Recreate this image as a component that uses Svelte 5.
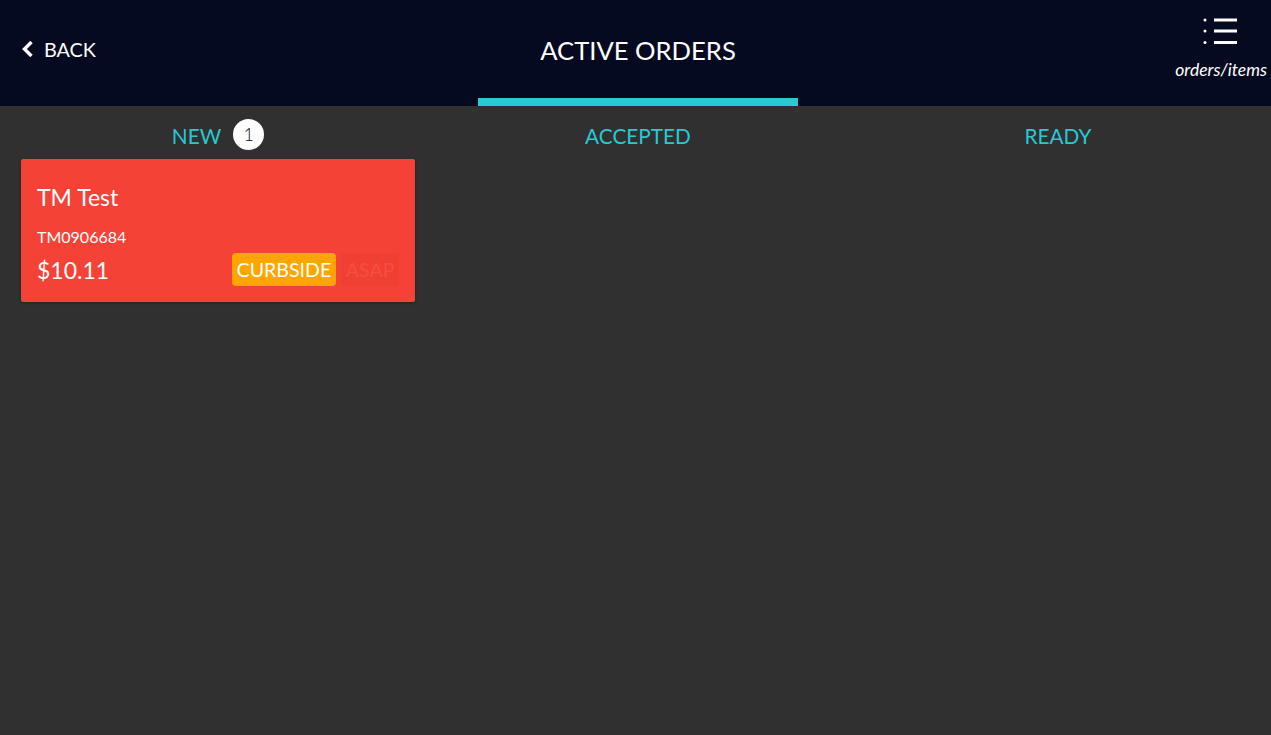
<script>
	let columns = [
		{
			name: "NEW",
			count: 1,
			orders: [{ customer: "TM Test", code: "TM0906684", total: "$10.11", type: "CURBSIDE", time: "ASAP" }],
		},
		{ name: "ACCEPTED", orders: [] },
		{ name: "READY", orders: [] },
	];
</script>

<div class="page">
	<header class="topbar">
		<a class="back" href="#back">
			<svg width="11" height="16" viewBox="0 0 11 16" aria-hidden="true">
				<path d="M9.5 1 L2.5 8 L9.5 15" fill="none" stroke="#fff" stroke-width="3.4" />
			</svg>
			<span>BACK</span>
		</a>
		<h1>ACTIVE ORDERS</h1>
		<button class="toggle">
			<svg width="34" height="28" viewBox="0 0 34 28" aria-hidden="true">
				<circle cx="2" cy="3" r="1.5" fill="#fff" />
				<circle cx="2" cy="14" r="1.5" fill="#fff" />
				<circle cx="2" cy="25.5" r="1.5" fill="#fff" />
				<path d="M11 3H34M11 14H34M11 25.5H34" stroke="#fff" stroke-width="3" />
			</svg>
			<span>orders/items</span>
		</button>
		<div class="indicator"></div>
	</header>

	<main class="board">
		{#each columns as column}
			<section class="column">
				<h2>
					<span>{column.name}</span>
					{#if column.count}
						<span class="count">{column.count}</span>
					{/if}
				</h2>
				{#each column.orders as order}
					<article class="card">
						<div class="customer">{order.customer}</div>
						<div class="code">{order.code}</div>
						<div class="bottom">
							<span class="total">{order.total}</span>
							<span class="tags">
								<span class="tag curbside">{order.type}</span>
								<span class="tag asap">{order.time}</span>
							</span>
						</div>
					</article>
				{/each}
			</section>
		{/each}
	</main>
</div>

<style>
	:global(body) {
		margin: 0;
		background: #303030;
	}

	.page {
		height: 735px;
		overflow: hidden;
		background: #303030;
		font-family: Lato, "Open Sans", sans-serif;
		color: #fff;
	}

	.topbar {
		position: relative;
		display: grid;
		grid-template-columns: 420px 420px 420px;
		height: 106px;
		padding-left: 8px;
		background: #050a20;
		box-sizing: border-box;
	}

	.back {
		display: flex;
		align-items: center;
		gap: 11px;
		height: 98px;
		padding-left: 14px;
		color: #fff;
		font-size: 19.8px;
		text-decoration: none;
	}

	h1 {
		margin: 0;
		height: 100px;
		line-height: 100px;
		font-size: 25.6px;
		font-weight: 400;
		text-align: center;
	}

	.toggle {
		position: absolute;
		top: 17px;
		right: 4px;
		display: flex;
		flex-direction: column;
		align-items: center;
		padding: 0;
		border: 0;
		background: none;
		color: #fff;
		font-family: inherit;
		font-size: 17.5px;
		font-style: italic;
	}

	.toggle svg {
		margin-right: 2px;
	}

	.toggle span {
		margin-top: 14px;
	}

	.indicator {
		position: absolute;
		left: 478px;
		bottom: 0;
		width: 320px;
		height: 8px;
		background: #29c8d3;
	}

	.board {
		display: grid;
		grid-template-columns: 420px 420px 420px;
		padding-left: 8px;
	}

	.column {
		padding: 0 13px;
	}

	h2 {
		display: flex;
		justify-content: center;
		align-items: center;
		gap: 12px;
		box-sizing: border-box;
		height: 53px;
		margin: 0;
		padding-top: 6px;
		color: #29c8d3;
		font-size: 20.8px;
		font-weight: 400;
	}

	.count {
		display: flex;
		justify-content: center;
		align-items: center;
		width: 31px;
		height: 31px;
		margin-top: -3px;
		border-radius: 50%;
		background: #fff;
		color: #111;
		font-size: 18px;
		font-weight: 300;
	}

	.card {
		box-sizing: border-box;
		height: 143px;
		padding: 23px 16px 0;
		border-radius: 2px;
		background: #f44336;
		box-shadow: 0 1px 3px rgba(0, 0, 0, 0.3);
	}

	.customer {
		font-size: 23px;
		line-height: 30px;
	}

	.code {
		margin-top: 15px;
		font-size: 16px;
		line-height: 20px;
	}

	.bottom {
		display: flex;
		justify-content: space-between;
		align-items: center;
		margin-top: 6px;
	}

	.total {
		font-size: 23px;
	}

	.tags {
		display: flex;
		gap: 5px;
	}

	.tag {
		padding: 0 5px;
		border-radius: 4px;
		font-size: 19.6px;
		line-height: 33px;
	}

	.curbside {
		background: #ffa500;
	}

	.asap {
		padding: 0 4.5px;
		background: #f03f33;
		color: #f44f43;
	}
</style>
